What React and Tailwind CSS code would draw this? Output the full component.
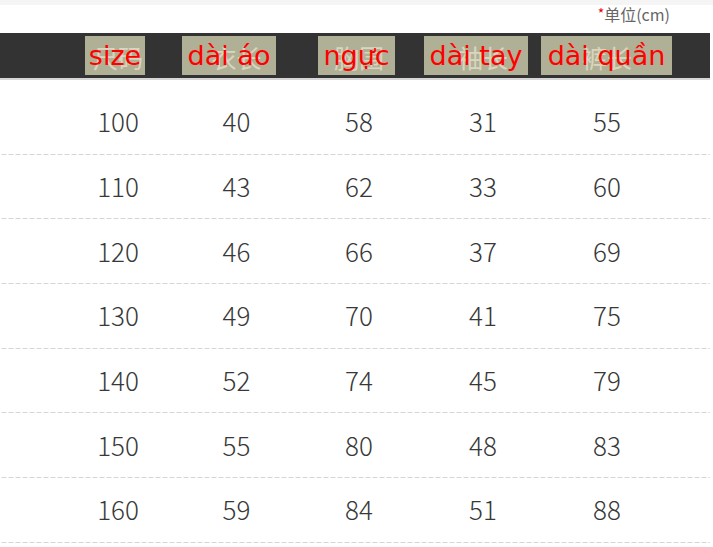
import React from "react";

const headers = [
  { vi: "size", zh: "尺码", left: 85, width: 60 },
  { vi: "dài áo", zh: "衣长", left: 182, width: 94 },
  { vi: "ngực", zh: "胸围", left: 318, width: 77 },
  { vi: "dài tay", zh: "袖长", left: 424, width: 104 },
  { vi: "dài quần", zh: "裤长", left: 541, width: 131 },
];

const rows = [
  [100, 40, 58, 31, 55],
  [110, 43, 62, 33, 60],
  [120, 46, 66, 37, 69],
  [130, 49, 70, 41, 75],
  [140, 52, 74, 45, 79],
  [150, 55, 80, 48, 83],
  [160, 59, 84, 51, 88],
];

export default function App() {
  return (
    <div className="w-[713px] h-[547px] overflow-hidden bg-white font-['Noto_Sans_CJK_SC',sans-serif]">
      <div className="h-[5px] bg-[#f5f5f5]" />
      <div className="w-[710px]">
        <div className="h-[28px] flex items-start justify-end pr-[40px] text-[16px] leading-[18px] text-[#666]">
          <span className="text-[#e60012] text-[14px] -mt-[1px]">*</span>
          <span>单位(cm)</span>
        </div>

        <div className="relative h-[45px] bg-[#333333] border-b-2 border-[#d6d6d6] box-content">
          {headers.map((h) => (
            <div
              key={h.left}
              className="absolute top-[3px] h-[39px] bg-[#b0b096]"
              style={{ left: h.left, width: h.width }}
            />
          ))}
          <div className="relative z-10 grid grid-cols-[116px_121px_124px_124px_124px] pl-[60px] h-full items-center text-[25px] text-[#f4f0da]/60">
            {headers.map((h) => (
              <div key={h.zh} className="text-center mt-[4px]">
                {h.zh}
              </div>
            ))}
          </div>
          {headers.map((h) => (
            <div
              key={h.vi}
              className="absolute z-20 top-[3px] h-[39px] flex items-center justify-center text-[27px] leading-none text-[#ff0000] font-['DejaVu_Sans',sans-serif] whitespace-nowrap"
              style={{ left: h.left, width: h.width }}
            >
              {h.vi}
            </div>
          ))}
        </div>

        <div className="pt-[10px]">
          {rows.map((r, i) => (
            <div
              key={i}
              className="h-[64.7px] grid grid-cols-[116px_121px_124px_124px_124px] pl-[60px] items-center text-[26px] font-light text-[#383838] bg-[linear-gradient(to_right,#d6d6d6_5px,transparent_5px)] bg-[length:7px_1px] bg-repeat-x bg-bottom"
            >
              {r.map((v, j) => (
                <div key={j} className="text-center -mt-[3px]">
                  {v}
                </div>
              ))}
            </div>
          ))}
        </div>
      </div>
    </div>
  );
}
